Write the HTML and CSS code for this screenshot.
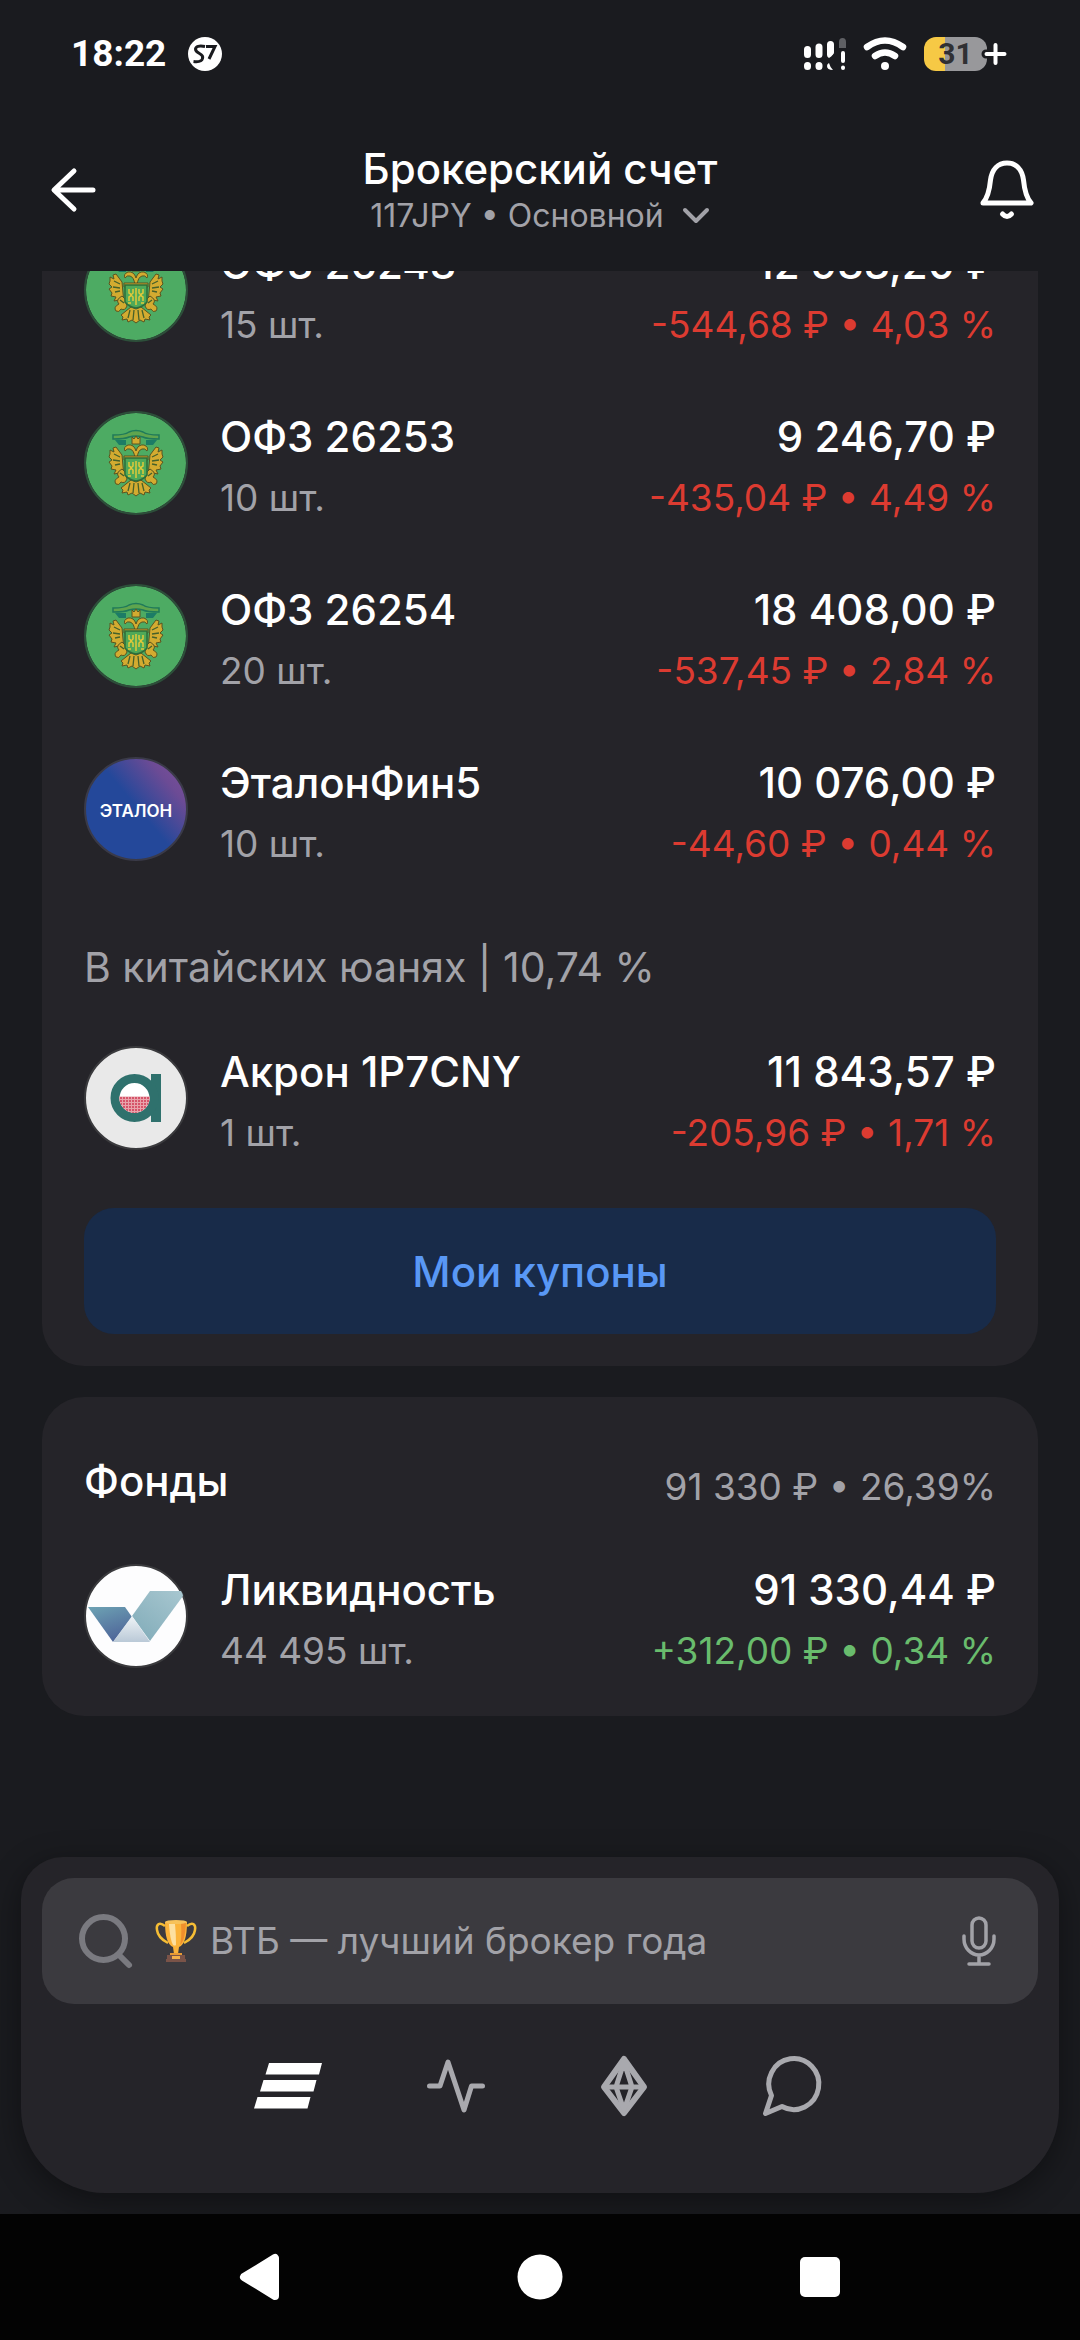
FILE: index.html
```html
<!DOCTYPE html>
<html lang="ru">
<head>
<meta charset="utf-8">
<meta name="viewport" content="width=device-width, initial-scale=1">
<title>Брокерский счет</title>
<link rel="stylesheet" href="styles.css">
</head>
<body>
<svg class="defs" aria-hidden="true">
  <defs>
    <symbol id="emblem" viewBox="0 0 104 104">
      <circle cx="52" cy="52" r="50" fill="#4dab63"/>
      <path d="M29 24q12 0 16-3q7-3 14 0q4 3 16 3v4q-12 0-16-2q-7-2-14 0q-4 2-16 2z" fill="#5fa54e" stroke="#1f7a5a" stroke-width="1.5"/>
      <path d="M31 29l4 5h7v-5zM73 29l-4 5h-7v-5z" fill="#1c7c66"/>
      <g fill="#d3ab30" stroke="#5b5520" stroke-width="1">
        <path d="M48 26l2 2 2-3 2 3 2-2v7h-8z"/>
        <path d="M51 47q-1-8-5-9-3-1-5 2-2-4 3-6 6-1 8 6 2-7 8-6 5 2 3 6-2-3-5-2-4 1-5 9z"/>
        <path d="M38 44l-6-8-3 1 1 4-4-2v4l-1 3 3 3-3 2 3 4-1 3 5 1-2 4 5-1 1 6 4-2zM66 44l6-8 3 1-1 4 4-2v4l1 3-3 3 3 2-3 4 1 3-5 1 2 4-5-1-1 6-4-2z"/>
        <path d="M40 45h24v4H40z"/>
        <path d="M38 58q-7 4-3 8-6 3-3 7 3 2 5-2 4 2 6-3l-2-7zM66 58q7 4 3 8 6 3 3 7-3 2-5-2-4 2-6-3l2-7z"/>
        <path d="M47 69l-10 8 2 2-1 3 5-1 1 3 4-2 4 3 4-3 4 2 1-3 5 1-1-3 2-2-10-8-5 2z"/>
      </g>
      <path d="M30 43l6 3M29 49l7 1M31 54l5-1M74 43l-6 3M75 49l-7 1M73 54l-5-1M46 72l-2 8M50 72l-1 10M54 72l1 10M58 72l2 8M36 62l4 3M68 62l-4 3" stroke="#46612a" stroke-width="1.3" fill="none"/>
      <path d="M41 47h22v17q-4 5-11 6-7-1-11-6z" fill="#4fa958" stroke="#2d6d3a" stroke-width="1.5"/>
      <path d="M45 51v4q4 2 0 4v4M49 51v4q-3 2 0 4v4M52 50v17M59 51v4q-4 2 0 4v4M55 51v4q3 2 0 4v4M44 65h3M57 65h3" stroke="#e0c93a" stroke-width="1.5" fill="none"/>
      <circle cx="52" cy="52" r="51" fill="none" stroke="#2d4f3a" stroke-width="2"/>
    </symbol>
    <linearGradient id="etalon-fill" x1="0.35" y1="0.6" x2="0.95" y2="0.1">
      <stop offset="0.25" stop-color="#24489a"/><stop offset="0.75" stop-color="#6c4b95"/><stop offset="1" stop-color="#7a4f98"/>
    </linearGradient>
    <linearGradient id="wing-left" x1="0" y1="0" x2="0.4" y2="1">
      <stop offset="0" stop-color="#6ea3b4"/><stop offset="1" stop-color="#4f679a"/>
    </linearGradient>
    <linearGradient id="wing-right" x1="1" y1="0" x2="0.2" y2="1">
      <stop offset="0" stop-color="#a8c7d0"/><stop offset="1" stop-color="#83adba"/>
    </linearGradient>
    <linearGradient id="wing-base" x1="0" y1="0" x2="0" y2="1">
      <stop offset="0" stop-color="#eff4f7"/><stop offset="1" stop-color="#bac9d7"/>
    </linearGradient>
    <pattern id="mesh" width="3" height="3" patternUnits="userSpaceOnUse">
      <rect width="3" height="3" fill="#e8a3ab"/><rect width="2" height="2" fill="#d6546a"/>
    </pattern>
  </defs>
</svg>

<div class="status">
  <time class="clock">18:22</time>
  <svg class="s7" width="34" height="34" viewBox="0 0 34 34" aria-label="S7">
    <circle cx="17" cy="17" r="17" fill="#fff"/>
    <path d="M17 9.500q-9-1.500-9.500 2.500 0 2.500 4 4.500 4 2 3 5-1 4-9 3" fill="none" stroke="#1a1b1f" stroke-width="3"/>
    <path d="M18 9.500h9l-6 12.500" fill="none" stroke="#1a1b1f" stroke-width="3"/>
  </svg>
  <div class="indicators">
    <svg width="42" height="32" viewBox="0 0 42 32" aria-label="Сигнал">
      <g stroke="#fff" stroke-width="7" stroke-linecap="round">
        <path d="M3.500 11.500v5M3.500 27.500v1M15 9v7.500M15 27.500v1M26.500 6.500v7"/>
      </g>
      <path d="M23 13h7q0 4-5 7-2-1-2-3zM25 25q1 4 4 7-6 0-6-4 0-2 2-3z" fill="#fff"/>
      <path d="M39 15v8M39 29.500v.5" stroke="#fff" stroke-width="4" stroke-linecap="round"/>
      <path d="M35 10V4q0-4 3.500-4T42 4v6z" fill="#5f6064"/>
    </svg>
    <svg width="44" height="33" viewBox="0 0 44 33" aria-label="Wi-Fi">
      <g fill="none" stroke="#fff" stroke-width="6.500" stroke-linecap="round">
        <path d="M4 10q18-13 36 0M12 19q10-7 20 0"/>
      </g>
      <circle cx="22" cy="29" r="4" fill="#fff"/>
    </svg>
    <div class="battery">
      <span class="level">31</span>
      <svg class="plus" width="24" height="24" viewBox="0 0 24 24" aria-hidden="true">
        <path d="M3 12h18M12 3v18" stroke="#1a1b1f" stroke-width="9" stroke-linecap="round"/>
        <path d="M3.500 12h18M12.500 3v18" stroke="#fff" stroke-width="4" stroke-linecap="round"/>
      </svg>
    </div>
  </div>
</div>

<header class="header">
  <button class="icon-button" aria-label="Назад">
    <svg width="44" height="44" viewBox="0 0 44 44"><path d="M23 3L3 22l20 19M4 22h38" fill="none" stroke="#fff" stroke-width="5" stroke-linecap="round" stroke-linejoin="round"/></svg>
  </button>
  <div class="heading">
    <h1 class="title">Брокерский счет</h1>
    <button class="account">117JPY • Основной
      <svg width="28" height="18" viewBox="0 0 28 18" aria-hidden="true"><path d="M3 3l11 11L25 3" fill="none" stroke="#a2a2a8" stroke-width="4" stroke-linecap="round" stroke-linejoin="round"/></svg>
    </button>
  </div>
  <button class="icon-button" aria-label="Уведомления">
    <svg width="54" height="60" viewBox="0 0 54 60"><g fill="none" stroke="#fff" stroke-width="5" stroke-linecap="round" stroke-linejoin="round"><path d="M3 43Q9 36 10.500 20C12 9 18 3 27 3s15 6 16.500 17Q45 36 51 43z"/><path d="M22.500 54q4.500 5 9 0"/></g></svg>
  </button>
</header>

<main class="content">
  <div class="feed">
    <section class="card card-bonds" aria-label="Облигации">
      <ul class="assets">
        <li class="asset">
          <svg class="logo" viewBox="0 0 104 104" aria-hidden="true"><use href="#emblem"/></svg>
          <div class="info"><p class="name">ОФЗ 26248</p><p class="note">15 шт.</p></div>
          <div class="info value"><p class="name">12 983,20 ₽</p><p class="note loss">-544,68 ₽ • 4,03 %</p></div>
        </li>
        <li class="asset">
          <svg class="logo" viewBox="0 0 104 104" aria-hidden="true"><use href="#emblem"/></svg>
          <div class="info"><p class="name">ОФЗ 26253</p><p class="note">10 шт.</p></div>
          <div class="info value"><p class="name">9 246,70 ₽</p><p class="note loss">-435,04 ₽ • 4,49 %</p></div>
        </li>
        <li class="asset">
          <svg class="logo" viewBox="0 0 104 104" aria-hidden="true"><use href="#emblem"/></svg>
          <div class="info"><p class="name">ОФЗ 26254</p><p class="note">20 шт.</p></div>
          <div class="info value"><p class="name">18 408,00 ₽</p><p class="note loss">-537,45 ₽ • 2,84 %</p></div>
        </li>
        <li class="asset">
          <svg class="logo" viewBox="0 0 104 104">
            <circle cx="52" cy="52" r="51" fill="url(#etalon-fill)" stroke="#3a3a48" stroke-width="2"/>
            <text class="logo-text" x="52" y="60" text-anchor="middle">ЭТАЛОН</text>
          </svg>
          <div class="info"><p class="name">ЭталонФин5</p><p class="note">10 шт.</p></div>
          <div class="info value"><p class="name">10 076,00 ₽</p><p class="note loss">-44,60 ₽ • 0,44 %</p></div>
        </li>
      </ul>
      <h2 class="group">В китайских юанях | 10,74 %</h2>
      <ul class="assets">
        <li class="asset">
          <svg class="logo" viewBox="0 0 104 104" aria-hidden="true">
            <circle cx="52" cy="52" r="51" fill="#e9e9e9" stroke="#3a3a3d" stroke-width="2"/>
            <path d="M67 28h10v48H67z" fill="#2f716d"/>
            <circle cx="50.500" cy="52" r="19.500" fill="#fff" stroke="#2f716d" stroke-width="9"/>
            <path d="M35 50.500h31a15.500 16.500 0 0 1-31 0z" fill="url(#mesh)"/>
          </svg>
          <div class="info"><p class="name">Акрон 1P7CNY</p><p class="note">1 шт.</p></div>
          <div class="info value"><p class="name">11 843,57 ₽</p><p class="note loss">-205,96 ₽ • 1,71 %</p></div>
        </li>
      </ul>
      <button class="coupons">Мои купоны</button>
    </section>

    <section class="card card-funds">
      <div class="card-head">
        <h2 class="card-title">Фонды</h2>
        <p class="card-total">91 330 ₽ • 26,39%</p>
      </div>
      <ul class="assets">
        <li class="asset">
          <svg class="logo" viewBox="0 0 104 104" aria-hidden="true">
            <circle cx="52" cy="52" r="51" fill="#fdfdfe" stroke="#3a3a3d" stroke-width="2"/>
            <path d="M4 43h37l7 10-19 25z" fill="url(#wing-left)"/>
            <path d="M66 27h31q2 3 2 5L66 77 48 52z" fill="url(#wing-right)"/>
            <path d="M48 52l18 26H29z" fill="url(#wing-base)"/>
          </svg>
          <div class="info"><p class="name">Ликвидность</p><p class="note">44 495 шт.</p></div>
          <div class="info value"><p class="name">91 330,44 ₽</p><p class="note gain">+312,00 ₽ • 0,34 %</p></div>
        </li>
      </ul>
    </section>
  </div>
</main>

<div class="dock">
  <label class="search">
    <svg width="54" height="54" viewBox="0 0 54 54" aria-hidden="true"><circle cx="24.500" cy="24.500" r="21.500" fill="none" stroke="#7a7a80" stroke-width="6"/><path d="M40 41l10 10" stroke="#7a7a80" stroke-width="6" stroke-linecap="round"/></svg>
    <svg class="trophy" width="42" height="42" viewBox="0 0 42 42" aria-hidden="true">
      <g fill="none" stroke="#f5bd35" stroke-width="2.500">
        <path d="M10 6C4 1 1 5 2 10q1 8 11 13M32 6c6-5 9-1 8 4q-1 8-11 13"/>
      </g>
      <path d="M10 2q0 22 8 25l1 7h4l1-7q8-3 8-25z" fill="#fbb33a"/>
      <path d="M14 4q1 16 4 21 2 1 3 0 0-12-1-21z" fill="#fde0a0"/>
      <path d="M26 3h5q-1 18-6 22 2-8 1-22z" fill="#f08f2c"/>
      <ellipse cx="21" cy="2" rx="11" ry="2" fill="#f7c25a"/>
      <path d="M15 33h12v3H15z" fill="#e89a34"/>
      <path d="M12 35h18v4H12zM11 39h20v3H11z" fill="#7a5348"/>
      <path d="M17 36h8v3h-8z" fill="#f4b04a"/>
    </svg>
    <input class="search-input" type="text" aria-label="Поиск" placeholder="ВТБ — лучший брокер года">
    <svg width="34" height="50" viewBox="0 0 34 50" aria-hidden="true"><g fill="none" stroke="#a2a2a8" stroke-width="3.500" stroke-linecap="round"><rect x="10" y="2" width="14" height="30" rx="7"/><path d="M2 20v3a15 16 0 0 0 30 0v-3M17 39v9M7 48h20"/></g></svg>
  </label>
  <nav class="tabs">
    <a class="tab" href="#" aria-label="Главная"><svg width="68" height="46" viewBox="0 0 68 46"><path d="M15 0h53l-3 11.500H11.500zM9.500 17h53l-3 11.500H6zM3.500 34h53l-3 11.500H0z" fill="#fff"/></svg></a>
    <a class="tab" href="#" aria-label="Рынок"><svg width="58" height="54" viewBox="0 0 58 54"><path d="M2.500 27H13l8-24 16 48 7.500-24h11" fill="none" stroke="#a9a9ae" stroke-width="5" stroke-linecap="round" stroke-linejoin="round"/></svg></a>
    <a class="tab" href="#" aria-label="Витрина"><svg width="46" height="60" viewBox="0 0 46 60"><g fill="none" stroke="#a9a9ae" stroke-width="5" stroke-linejoin="round"><path d="M23 3l20 28-20 26L3 31z" stroke-width="6"/><path d="M3 31h40M23 6l-8 25 8 23 8-23z"/></g><path d="M23 2l8 13H15zM23 58l5-10H18z" fill="#a9a9ae"/></svg></a>
    <a class="tab" href="#" aria-label="Чат"><svg width="58" height="60" viewBox="0 0 58 60"><path d="M2.500 57.500L8.500 39.500a25 25.500 0 1 1 10.500 11z" fill="none" stroke="#a9a9ae" stroke-width="5" stroke-linejoin="round"/></svg></a>
  </nav>
</div>

<nav class="system">
  <button class="system-button" aria-label="Назад"><svg width="46" height="46" viewBox="0 0 46 46"><path d="M7 23L38 4v38z" fill="#fff" stroke="#fff" stroke-width="8" stroke-linejoin="round"/></svg></button>
  <button class="system-button" aria-label="Домой"><svg width="46" height="46" viewBox="0 0 46 46"><circle cx="23" cy="23" r="22.500" fill="#fff"/></svg></button>
  <button class="system-button" aria-label="Недавние"><svg width="46" height="46" viewBox="0 0 46 46"><rect x="3" y="3" width="40" height="40" rx="5" fill="#fff"/></svg></button>
</nav>
</body>
</html>
```
FILE: styles.css
```css
* {
  box-sizing: border-box;
}

body {
  margin: 0;
  min-height: 100vh;
  display: flex;
  flex-direction: column;
  background: #1a1b1f;
  color: #fff;
  font-family: Inter, "Noto Sans", sans-serif;
  font-size: 37px;
}

h1, h2, p, ul {
  margin: 0;
  padding: 0;
  font-weight: 400;
}

ul {
  list-style: none;
}

button {
  padding: 0;
  border: 0;
  background: none;
  color: inherit;
  font: inherit;
}

svg {
  display: block;
  flex: none;
  overflow: visible;
}

.defs {
  position: absolute;
  width: 0;
  height: 0;
}

/* Status bar */
.status {
  display: flex;
  align-items: center;
  height: 105px;
  padding: 2px 73px 0 71px;
}

.clock {
  font-family: Roboto, Inter, sans-serif;
  font-size: 37px;
  font-weight: 700;
  line-height: 48px;
}

.s7 {
  margin-left: 22px;
}

.indicators {
  display: flex;
  align-items: center;
  gap: 17px;
  margin-left: auto;
}

.battery {
  display: flex;
  align-items: center;
}

.level {
  width: 63px;
  border-radius: 12px;
  background: linear-gradient(90deg, #f6c945 21px, #98989b 21px);
  color: #303033;
  font-family: Roboto, Inter, sans-serif;
  font-size: 30px;
  font-weight: 700;
  line-height: 34px;
  text-align: center;
}

.plus {
  margin-left: -4px;
}

/* Header */
.header {
  display: grid;
  grid-template-columns: 54px 1fr 54px;
  align-items: center;
  padding: 38px 46px 34px;
}

.icon-button {
  display: grid;
  place-items: center;
}

.heading {
  display: flex;
  flex-direction: column;
  align-items: center;
}

.title {
  font-size: 42px;
  font-weight: 500;
  line-height: 52px;
}

.account {
  display: flex;
  align-items: center;
  gap: 18px;
  color: #a2a2a8;
  font-size: 32px;
  line-height: 42px;
}

/* Scrolled list of cards */
.content {
  flex: 1;
  overflow: hidden;
  padding: 0 42px;
}

.feed {
  display: grid;
  gap: 31px;
  margin-top: -67px;
  padding-bottom: 141px;
}

.card {
  padding: 0 42px;
  border-radius: 42px;
  background: #252429;
}

.card-bonds {
  padding-bottom: 32px;
}

.card-funds {
  padding-bottom: 13px;
}

.asset {
  display: grid;
  grid-template-columns: 104px auto 1fr;
  column-gap: 32px;
  height: 173px;
  padding-top: 34px;
}

.logo {
  width: 104px;
  height: 104px;
}

.logo-text {
  fill: #fff;
  font-size: 17px;
  font-weight: 600;
}

.info {
  display: grid;
  grid-auto-rows: 52px;
  row-gap: 9px;
  white-space: nowrap;
}

.value {
  text-align: right;
}

.name {
  font-size: 42px;
  font-weight: 500;
  line-height: 52px;
}

.note {
  color: #a2a2a8;
  line-height: 52px;
}

.loss {
  color: #dc3b31;
}

.gain {
  color: #69bc6d;
}

.group {
  padding: 41px 0 15px;
  color: #a2a2a8;
  font-size: 41px;
  line-height: 60px;
}

.coupons {
  display: block;
  width: 100%;
  height: 126px;
  margin-top: 23px;
  border-radius: 30px;
  background: #182b49;
  color: #5998f5;
  font-size: 42px;
  font-weight: 500;
}

.card-head {
  display: flex;
  justify-content: space-between;
  height: 133px;
  padding-top: 58px;
}

.card-title {
  font-size: 42px;
  font-weight: 500;
  line-height: 52px;
}

.card-total {
  color: #a2a2a8;
  line-height: 64px;
}

/* Floating dock with search and tabs */
.dock {
  margin: 0 21px 21px;
  padding: 21px 21px 25px;
  border-radius: 42px 42px 84px 84px;
  background: #252429;
  box-shadow: 0 8px 32px rgba(0, 0, 0, 0.4);
}

.search {
  display: flex;
  align-items: center;
  height: 126px;
  padding: 0 42px 0 37px;
  border-radius: 32px;
  background: #3b3a3f;
}

.trophy {
  margin: 0 13px 0 22px;
}

.search-input {
  flex: 1;
  min-width: 0;
  padding: 0;
  border: 0;
  outline: 0;
  background: none;
  color: #fff;
  font: inherit;
  line-height: 52px;
}

.search-input::placeholder {
  color: #a2a2a8;
  opacity: 1;
}

.tabs {
  display: flex;
  justify-content: center;
}

.tab {
  display: flex;
  align-items: center;
  justify-content: center;
  width: 168px;
  height: 164px;
}

/* System navigation */
.system {
  position: relative;
  display: flex;
  align-items: center;
  justify-content: center;
  gap: 234px;
  height: 126px;
  background: #030303;
}
```
